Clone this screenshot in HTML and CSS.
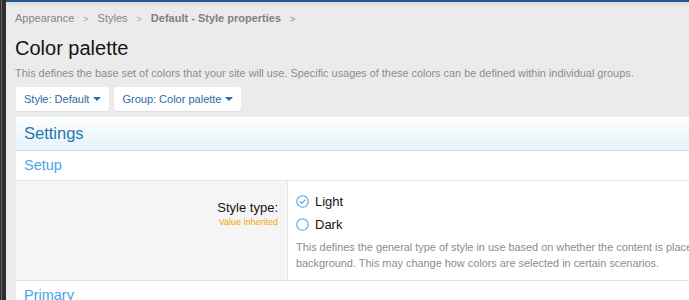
FILE: index.html
```html
<!DOCTYPE html>
<html lang="en">
<head>
  <meta charset="UTF-8">
  <title>Color palette</title>
  <link rel="stylesheet" href="styles.css">
</head>
<body>
  <div class="app">
    <div class="rail"></div>
    <main class="page">
      <div class="topline"></div>

      <ul class="crumbs">
        <li>Appearance</li>
        <li>Styles</li>
        <li class="strong">Default - Style properties</li>
      </ul>

      <h1>Color palette</h1>
      <p class="explain">This defines the base set of colors that your site will use. Specific usages of these colors can be defined within individual groups.</p>

      <div class="filters">
        <button class="menu-btn">Style: Default <span class="caret"></span></button>
        <button class="menu-btn">Group: Color palette <span class="caret"></span></button>
      </div>

      <div class="block">
        <h2 class="block-head">Settings</h2>
        <h3 class="block-sub">Setup</h3>

        <div class="form-row">
          <div class="form-label">
            <div class="label-text">Style type:</div>
            <div class="inherited">Value inherited</div>
          </div>
          <div class="form-input">
            <label class="radio">
              <svg width="13" height="13" viewBox="0 0 13 13">
                <circle cx="6.5" cy="6.5" r="5.7" fill="none" stroke="#52a5e0" stroke-width="1.1"/>
                <path d="M4 6.6 L5.8 8.3 L9 5" fill="none" stroke="#52a5e0" stroke-width="1.1" stroke-linecap="round" stroke-linejoin="round"/>
              </svg>
              Light
            </label>
            <label class="radio">
              <svg width="13" height="13" viewBox="0 0 13 13">
                <circle cx="6.5" cy="6.5" r="5.7" fill="none" stroke="#52a5e0" stroke-width="1.1"/>
              </svg>
              Dark
            </label>
            <p class="hint">This defines the general type of style in use based on whether the content is placed on a light or dark background. This may change how colors are selected in certain scenarios.</p>
          </div>
        </div>

        <h3 class="block-sub">Primary</h3>
      </div>
    </main>
  </div>
</body>
</html>
```

FILE: styles.css
```css
body{
  margin: 0;
  background: #ebebeb;
  font-family: 'Liberation Sans', Arial, sans-serif;
  overflow: hidden;
}
.app{
  display: flex;
  height: 300px;
}
.rail{
  width: 6px;
  flex-shrink: 0;
  background: linear-gradient(to right, #2e2e2e 0, #2e2e2e 1px, #6a6a6a 1px, #6a6a6a 2px, #2e2e2e 2px);
}
.page{
  flex: 1;
  min-width: 0;
  overflow: hidden;
  padding: 0 0 0 9px;
  position: relative;
}
.topline{
  position: absolute;
  left: 0;
  right: 0;
  top: 0;
  height: 2px;
  background: #24568c;
  box-shadow: 0 1px 4px rgba(0,0,0,0.18);
}
.crumbs{
  list-style: none;
  margin: 0;
  padding: 11px 0 0;
  display: flex;
  align-items: baseline;
  font-size: 11px;
  color: #858585;
  line-height: 14px;
}
.crumbs li::after{
  content: '>';
  margin: 0 9px 0 9px;
  font-size: 9px;
  color: #a5a5a5;
}
.crumbs .strong{
  font-weight: bold;
  color: #808080;
}
h1{
  margin: 9px 0 0;
  font-size: 20px;
  font-weight: normal;
  color: #141414;
  line-height: 26px;
}
.explain{
  margin: 5px 0 0;
  font-size: 10.9px;
  color: #8c8c8c;
  line-height: 14px;
  white-space: nowrap;
}
.filters{
  display: flex;
  gap: 5px;
  margin: 7px 0 0 1px;
}
.menu-btn{
  font-family: inherit;
  font-size: 11px;
  color: #2c6aa3;
  background: #fff;
  border: 0;
  border-radius: 3px;
  height: 24px;
  padding: 0 8px;
  display: flex;
  align-items: center;
  gap: 4px;
  box-shadow: 0 1px 1px rgba(0,0,0,0.05);
}
.caret{
  width: 0;
  height: 0;
  border-left: 4px solid transparent;
  border-right: 4px solid transparent;
  border-top: 4px solid #2c6aa3;
}
.block{
  margin: 6px 0 0 1px;
  width: 760px;
  background: #fff;
}
.block-head{
  margin: 0;
  height: 33px;
  padding: 0 8px;
  font-size: 16.5px;
  font-weight: normal;
  line-height: 33px;
  color: #2577b1;
  background: linear-gradient(to bottom, #fdfeff, #e6f2fa);
  border-bottom: 1px solid #d6d9dc;
}
.block-sub{
  margin: 0;
  height: 29px;
  padding: 0 8px;
  font-size: 14.5px;
  font-weight: normal;
  line-height: 29px;
  color: #47a5e6;
  border-bottom: 1px solid #e6e6e6;
}
.form-row{
  display: flex;
  border-bottom: 1px solid #e3e3e3;
  height: 99px;
}
.form-label{
  width: 272px;
  flex-shrink: 0;
  background: #f5f5f5;
  border-right: 1px solid #e6e6e6;
  text-align: right;
  padding: 19px 9px 0 0;
  box-sizing: border-box;
}
.label-text{
  font-size: 13px;
  color: #141414;
  line-height: 15px;
}
.inherited{
  font-size: 9px;
  color: #f0a500;
  margin-top: 2px;
}
.form-input{
  padding: 12px 0 0 8px;
}
.radio{
  display: flex;
  align-items: center;
  gap: 6px;
  font-size: 13px;
  color: #141414;
  height: 16px;
  margin-bottom: 7px;
}
.hint{
  margin: 4px 0 0;
  font-size: 10.9px;
  line-height: 16px;
  color: #8c8c8c;
  width: 520px;
}
```
